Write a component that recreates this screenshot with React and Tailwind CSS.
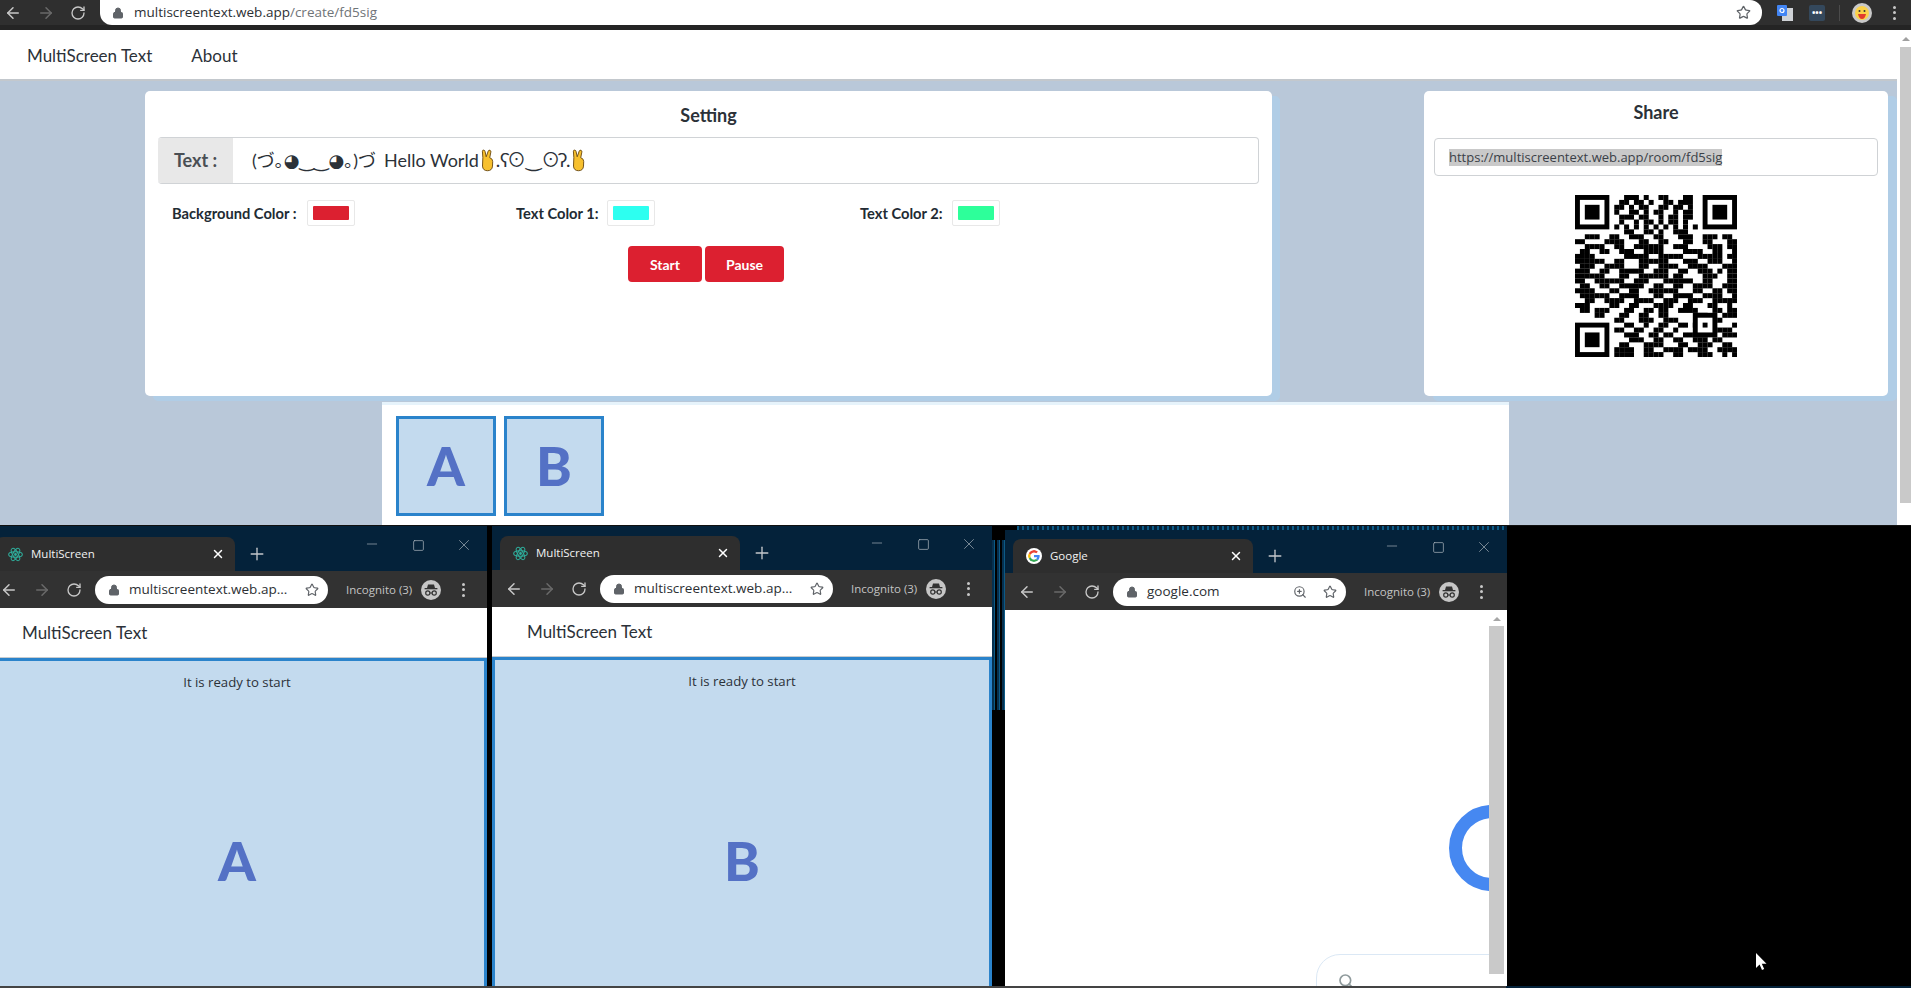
import React from "react";
import { ArrowLeft, ArrowRight, Lock, Minus, Plus, RotateCw, Search, Square, Star, X, ZoomIn } from "lucide-react";

const qrRows = [
  "000000000011101001100011000000000",
  "000000000110110100110111000000000",
  "000000001101011001101101000000000",
  "000000001001101011001011000000000",
  "000000000111011001011011000000000",
  "000000000100101101011010000000000",
  "000000001010101010101010100000000",
  "000000000011001101001110000000000",
  "001110011001110011000111001110110",
  "110000111100011001100011001100011",
  "001111001100111111001110000111011",
  "011001100111001111000011110011001",
  "111100000011111001111100011111011",
  "111111001100011111100011100111001",
  "011100111100011001111001111000111",
  "111001100111110011100110011101011",
  "111111000110011111101100001110011",
  "110011111100111000111111001100011",
  "011001100111110011001100111100111",
  "111100011001100111111000110011011",
  "011111100111100011001111001111001",
  "001100111100111100111001110011111",
  "111000011001100011110011000110010",
  "011011100011001101100111100011011",
  "000011000110011001100000011000111",
  "000000001100011100111000000111000",
  "000000000011001001100110111100001",
  "000000001100110011001000000011110",
  "000000000011100110110011111000111",
  "000000000001110011001100111011000",
  "000000000110001111000110011100110",
  "000000001111001100111101111001111",
  "000000001111001111001100011100101",
];

const Finder = ({ x, y }) => (
  <g>
    <rect x={x} y={y} width="7" height="7" fill="#000" />
    <rect x={x + 1} y={y + 1} width="5" height="5" fill="#fff" />
    <rect x={x + 2} y={y + 2} width="3" height="3" fill="#000" />
  </g>
);

const QrCode = () => (
  <svg viewBox="0 0 33 33" className="w-[162px] h-[162px]">
    {qrRows.map((row, y) =>
      row.split("").map((cell, x) => (cell === "1" ? <rect key={x + "-" + y} x={x} y={y} width="1.02" height="1.02" fill="#000" /> : null))
    )}
    <Finder x={0} y={0} />
    <Finder x={26} y={0} />
    <Finder x={0} y={26} />
    <rect x="24" y="24" width="5" height="5" fill="#000" />
    <rect x="25" y="25" width="3" height="3" fill="#fff" />
    <rect x="26" y="26" width="1" height="1" fill="#000" />
  </svg>
);

const Hand = () => (
  <svg viewBox="0 0 14 24" className="inline-block mx-[2px] w-[13px] h-[23px] align-[-5px]">
    <path
      d="M2 9 L1.5 2 Q1.6 .6 3 .8 Q4.2 1 4.4 2.4 L5.6 8 L7.8 1.8 Q8.4 .4 9.8 1 Q11 1.6 10.6 3 L9.4 9 Q12.6 10 12.6 13 L12.4 18 Q12 23 7 23 Q2 23 1.6 18 Z"
      fill="#f7c02e"
      stroke="#6b4a10"
      strokeWidth="1"
    />
  </svg>
);

const Incognito = () => (
  <svg viewBox="0 0 20 20" className="w-[20px] h-[20px]">
    <circle cx="10" cy="10" r="10" fill="#c6c6c6" />
    <path d="M6 8 L7 4.5 H13 L14 8 Z" fill="#333" />
    <rect x="3.6" y="8" width="12.8" height="1.3" fill="#333" />
    <circle cx="6.8" cy="13" r="2.1" fill="none" stroke="#333" strokeWidth="1.2" />
    <circle cx="13.2" cy="13" r="2.1" fill="none" stroke="#333" strokeWidth="1.2" />
    <rect x="8.8" y="12.5" width="2.4" height="1" fill="#333" />
  </svg>
);

const ReactLogo = () => (
  <svg viewBox="0 0 16 16" className="w-[15px] h-[15px]">
    <g fill="none" stroke="#2fae9c" strokeWidth="1.1">
      <ellipse cx="8" cy="8" rx="7.3" ry="2.9" />
      <ellipse cx="8" cy="8" rx="7.3" ry="2.9" transform="rotate(60 8 8)" />
      <ellipse cx="8" cy="8" rx="7.3" ry="2.9" transform="rotate(120 8 8)" />
    </g>
    <circle cx="8" cy="8" r="1.5" fill="#2fae9c" />
  </svg>
);

const GoogleG = () => (
  <svg viewBox="0 0 48 48" className="w-[16px] h-[16px] bg-white rounded-full p-[2px]">
    <path fill="#EA4335" d="M24 9.5c3.5 0 6.7 1.2 9.2 3.6l6.9-6.9C35.9 2.4 30.5 0 24 0 14.6 0 6.5 5.4 2.6 13.2l8 6.2C12.5 13.7 17.8 9.5 24 9.5z" />
    <path fill="#4285F4" d="M46.9 24.5c0-1.6-.1-3.1-.4-4.5H24v9h12.9c-.6 3-2.2 5.5-4.7 7.2l7.7 6c4.5-4.2 7-10.3 7-17.7z" />
    <path fill="#FBBC05" d="M10.5 28.6c-.5-1.4-.8-3-.8-4.6s.3-3.2.8-4.6l-8-6.2C.9 16.5 0 20.1 0 24s.9 7.5 2.6 10.8l7.9-6.2z" />
    <path fill="#34A853" d="M24 48c6.5 0 11.9-2.1 15.9-5.8l-7.7-6c-2.2 1.4-4.9 2.3-8.2 2.3-6.2 0-11.5-4.2-13.4-9.9l-8 6.2C6.5 42.6 14.6 48 24 48z" />
  </svg>
);

const Dots = () => (
  <div className="flex flex-col gap-[2.5px] items-center w-[12px]">
    <span className="w-[3px] h-[3px] rounded-full bg-[#c8c8c8]" />
    <span className="w-[3px] h-[3px] rounded-full bg-[#c8c8c8]" />
    <span className="w-[3px] h-[3px] rounded-full bg-[#c8c8c8]" />
  </div>
);

const ColorPick = ({ label, swatch, labelWidth }) => (
  <div className={"flex items-center " + labelWidth}>
    <span className="font-bold text-[14.7px] text-[#222b33] whitespace-nowrap">{label}</span>
    <span className="ml-auto flex items-center justify-center w-[48px] h-[26px] border border-[#e8e8e8] rounded-[2px] bg-white">
      <span className={"w-[36px] h-[14px] rounded-[1px] " + swatch} />
    </span>
  </div>
);

const Viewer = ({ letter }) => (
  <div className="flex-1 flex flex-col bg-[#c3daee] border-x-[3px] border-t-[3px] border-[#2a83cb] min-h-0">
    <div className="pt-[11px] text-center text-[13.2px] leading-[20px] text-[#2b3138] font-['Open_Sans',sans-serif]">It is ready to start</div>
    <div className="flex-1 flex items-center justify-center pt-[44px] text-[54px] leading-none font-black text-[#5471c5] font-['Lato',sans-serif]">{letter}</div>
  </div>
);

const BrowserWindow = ({ className, title, favicon, url, zoom, children }) => (
  <div className={"flex flex-col shrink-0 overflow-hidden bg-[#04223a] " + className}>
    <div className="flex items-start h-[35px] mt-[8px] shrink-0 font-['Open_Sans',sans-serif]">
      <div className="flex items-center self-end h-[34px] w-[240px] ml-[8px] pl-[13px] pr-[10px] rounded-t-[8px] bg-[#2e2e2e]">
        {favicon}
        <span className="ml-[8px] text-[11.5px] text-[#f2f2f2]">{title}</span>
        <X className="ml-auto text-white" size={14} strokeWidth={2.5} />
      </div>
      <Plus className="self-center ml-[12px] text-[#c4c7cb]" size={20} strokeWidth={1.6} />
      <div className="ml-auto flex text-[#aeb7bf]">
        <span className="w-[46px] flex justify-center"><Minus size={16} strokeWidth={1} /></span>
        <span className="w-[46px] flex items-center justify-center"><Square size={13} strokeWidth={1.3} /></span>
        <span className="w-[46px] flex justify-center"><X size={18} strokeWidth={0.9} /></span>
      </div>
    </div>
    <div className="flex items-center h-[37px] shrink-0 pl-[13px] bg-[#323232] font-['Open_Sans',sans-serif]">
      <div className="flex items-center gap-[15px] text-[#c8c8c8]">
        <ArrowLeft size={18} />
        <ArrowRight size={18} className="text-[#6a6a6a]" />
        <RotateCw size={16} />
      </div>
      <div className="flex items-center w-[233px] h-[28px] ml-[13px] pl-[13px] pr-[9px] rounded-full bg-white text-[#5f6368]">
        <Lock size={12} fill="#5f6368" strokeWidth={2} />
        <span className="ml-[9px] text-[13.5px] text-[#2c2f33] whitespace-nowrap">{url}</span>
        {zoom && <ZoomIn size={14} className="ml-auto" />}
        <Star size={14} strokeWidth={2} className={zoom ? "ml-[16px]" : "ml-auto"} />
      </div>
      <span className="ml-[18px] text-[11.5px] text-[#c4c4c4] whitespace-nowrap">Incognito (3)</span>
      <span className="ml-[9px]"><Incognito /></span>
      <span className="ml-[16px]"><Dots /></span>
    </div>
    {children}
  </div>
);

const MultiPage = ({ letter }) => (
  <div className="flex-1 flex flex-col bg-white min-h-0">
    <div className="flex items-center h-[50px] pl-[35px] pt-[1px] shrink-0 border-b border-[#c8cccf] text-[17px] text-[#2b3138] font-['Lato',sans-serif]">MultiScreen Text</div>
    <Viewer letter={letter} />
  </div>
);

export default function App() {
  return (
    <div className="w-[1911px] h-[988px] overflow-hidden flex flex-col bg-black font-['Lato',sans-serif]">
      {/* main browser toolbar */}
      <div className="flex h-[30px] shrink-0 bg-[#2f2f2f] border-b-[5px] border-[#242424] font-['Open_Sans',sans-serif]">
        <div className="flex items-center w-[100px] pl-[4px] gap-[15px] text-[#c8c8c8]">
          <ArrowLeft size={18} />
          <ArrowRight size={18} className="text-[#6a6a6a]" />
          <RotateCw size={16} />
        </div>
        <div className="flex items-center w-[1662px] h-[25px] pl-[12px] pr-[11px] rounded-b-[12px] rounded-r-[12px] bg-white text-[#5f6368]">
          <Lock size={12} fill="#5f6368" />
          <span className="ml-[10px] text-[13.5px] text-[#2c2f33]">multiscreentext.web.app<span className="text-[#6f7478]">/create/fd5sig</span></span>
          <Star size={15} strokeWidth={2} className="ml-auto" />
        </div>
        <div className="flex items-center pl-[15px]">
          <svg viewBox="0 0 16 16" className="w-[16px] h-[16px]">
            <rect x="5" y="3" width="11" height="13" fill="#cfd2d6" />
            <rect x="0" y="0" width="10" height="11" rx="1" fill="#4285f4" />
            <circle cx="5" cy="5.5" r="2" fill="none" stroke="#fff" strokeWidth="1.2" />
          </svg>
          <span className="ml-[16px] flex items-center justify-center w-[16px] h-[16px] rounded-[2px] bg-[#34485c] text-[#fff] text-[9px] leading-none font-bold">•••</span>
          <span className="ml-[14px] w-px h-[16px] bg-[#4b4b4b]" />
          <svg viewBox="0 0 20 20" className="ml-[12px] w-[20px] h-[20px]">
            <circle cx="10" cy="10" r="10" fill="#c9c9c9" />
            <circle cx="10" cy="10" r="7" fill="#fbd24a" />
            <circle cx="7.5" cy="8" r="1" fill="#333" />
            <circle cx="12.5" cy="8" r="1" fill="#333" />
            <path d="M6 11 H14 Q13 16 10 16 Q7 16 6 11 Z" fill="#e23b2e" />
          </svg>
          <span className="ml-[16px]"><Dots /></span>
        </div>
      </div>

      {/* page */}
      <div className="flex h-[495px] shrink-0">
        <div className="w-[1897px] flex flex-col bg-[#b9c8d9]">
          <nav className="flex items-center h-[51px] pl-[27px] pt-[2px] gap-[39px] shrink-0 bg-white border-b-2 border-[#c3c8cd] text-[17px] text-[#2b3138]">
            <span>MultiScreen Text</span>
            <span>About</span>
          </nav>
          <div className="flex pl-[145px] pt-[10px] gap-[152px] shrink-0">
            <section className="flex flex-col w-[1127px] h-[305px] px-[13px] rounded-[5px] bg-white shadow-[8px_5px_0_#b0cde6]">
              <h2 className="h-[46px] pt-[2px] flex items-center justify-center text-[18px] font-bold leading-[28px] text-[#2b3138]">Setting</h2>
              <div className="flex h-[47px] border-y border-r border-[#d0d3d6] rounded-[4px]">
                <div className="flex items-center justify-center w-[75px] rounded-l-[4px] bg-[#e8e8e8] text-[18px] font-bold text-[#4a4f54]">Text :</div>
                <div className="flex items-center pl-[19px] text-[18px] text-[#2b3138] whitespace-nowrap font-[family-name:Lato,'Noto_Sans_CJK_JP','DejaVu_Sans',sans-serif]">
                  <span>(づ｡◕‿‿◕｡)づ</span>
                  <span className="ml-[8px]">Hello World</span>
                  <Hand />
                  <span className="text-[19px]">.ʕ⊙‿⊙ʔ.</span>
                  <Hand />
                </div>
              </div>
              <div className="grid grid-cols-3 w-[1046px] pl-[14px] mt-[16px]">
                <ColorPick label="Background Color :" swatch="bg-[#dc2030]" labelWidth="w-[183px]" />
                <ColorPick label="Text Color 1:" swatch="bg-[#2dfff0]" labelWidth="w-[139px]" />
                <ColorPick label="Text Color 2:" swatch="bg-[#2dff9a]" labelWidth="w-[140px]" />
              </div>
              <div className="flex justify-center gap-[3px] mt-[20px] pr-[5px]">
                <button className="w-[74px] h-[36px] rounded-[4px] bg-[#dc2030] text-white text-[14px] font-bold">Start</button>
                <button className="w-[79px] h-[36px] rounded-[4px] bg-[#dc2030] text-white text-[14px] font-bold">Pause</button>
              </div>
            </section>
            <section className="flex flex-col items-center w-[464px] h-[305px] px-[10px] rounded-[5px] bg-white shadow-[9px_5px_0_#b0cde6]">
              <h2 className="h-[42px] flex items-center text-[18px] font-bold text-[#2b3138] pt-[1px]">Share</h2>
              <div className="flex items-center w-full h-[38px] mt-[5px] pl-[14px] border border-[#cfd2d5] rounded-[4px] text-[13px] text-[#3a4047]">
                <span className="bg-[#c9c9c9] leading-[17px] font-['Open_Sans',sans-serif]">https://multiscreentext.web.app/room/fd5sig</span>
              </div>
              <div className="mt-[19px]"><QrCode /></div>
            </section>
          </div>
          <div className="flex-1 w-[1127px] ml-[382px] mt-[6px] pt-[11px] pl-[14px] flex gap-[8px] bg-white border-t-[3px] border-[#e6f3fb] min-h-0">
            <div className="flex items-center justify-center w-[100px] h-[100px] bg-[#c3daee] border-[3px] border-[#2a83cb] text-[54px] leading-none font-black text-[#5471c5]">A</div>
            <div className="flex items-center justify-center w-[100px] h-[100px] bg-[#c3daee] border-[3px] border-[#2a83cb] text-[54px] leading-none font-black text-[#5471c5]">B</div>
          </div>
        </div>
        <div className="flex-1 flex flex-col bg-white pl-[3px]">
          <div className="h-[17px] flex items-center justify-center">
            <span className="w-0 h-0 border-x-[4px] border-x-transparent border-b-[4px] border-b-[#a0a0a0]" />
          </div>
          <div className="h-[456px] bg-[#c9c9c9]" />
        </div>
      </div>

      {/* screen share windows */}
      <div className="flex flex-1 min-h-0 border-t border-[#111]">
        <BrowserWindow
          className="w-[500px] -ml-[13px] mr-[5px] pt-[2px]"
          title="MultiScreen"
          favicon={<ReactLogo />}
          url="multiscreentext.web.ap..."
        >
          <MultiPage letter="A" />
        </BrowserWindow>
        <BrowserWindow
          className="w-[500px] pt-[1px]"
          title="MultiScreen"
          favicon={<ReactLogo />}
          url="multiscreentext.web.ap..."
        >
          <MultiPage letter="B" />
        </BrowserWindow>
        <div className="w-[13px] h-[170px] mt-[14px] shrink-0 bg-[repeating-linear-gradient(90deg,#06304f_0,#06304f_2px,#0b5a86_2px,#0b5a86_3px,#000_3px,#000_5px)]" />
        <div className="flex flex-col shrink-0 w-[502px]">
          <div className="h-[4px] ml-[12px] shrink-0 bg-[repeating-linear-gradient(90deg,#0b5a86_0,#0b5a86_2px,#04223a_2px,#04223a_5px)]" />
          <BrowserWindow
            className="flex-1 min-h-0"
            title="Google"
            favicon={<GoogleG />}
            url="google.com"
            zoom
          >
            <div className="flex-1 flex bg-white min-h-0">
              <div className="w-[484px] overflow-hidden flex flex-col pt-[195px] pl-[311px]">
                <div className="ml-[133px] w-[40px] h-[86px] overflow-hidden shrink-0">
                  <svg viewBox="0 0 86 86" className="w-[86px] h-[86px]">
                    <circle cx="43" cy="43" r="36.5" fill="none" stroke="#4688f1" strokeWidth="13" />
                  </svg>
                </div>
                <div className="mt-[63px] w-[300px] h-[60px] shrink-0 pl-[21px] pt-[18px] rounded-[24px] border border-[#dbe8f5]">
                  <Search size={16} className="text-[#8f9a9c]" strokeWidth={2.5} />
                </div>
              </div>
              <div className="flex flex-col items-center w-[15px] pt-[7px]">
                <span className="w-0 h-0 border-x-[4px] border-x-transparent border-b-[4px] border-b-[#a6a6a6]" />
                <span className="w-full h-[348px] mt-[5px] bg-[#c9c9c9]" />
              </div>
            </div>
          </BrowserWindow>
        </div>
        <div className="flex-1 flex flex-col items-end pr-[143px] pt-[427px] bg-black">
          <svg viewBox="0 0 12 18" className="w-[12px] h-[18px]">
            <path d="M0 0 V15 L3.6 11.6 L6 17 L8.2 16 L5.8 10.8 H10.5 Z" fill="#fff" />
          </svg>
        </div>
      </div>
      {/* bottom edge of the capture */}
      <div className="flex h-[2px] shrink-0 bg-[#04223a]">
        <div className="w-[1506px] bg-[#444]" />
      </div>
    </div>
  );
}
